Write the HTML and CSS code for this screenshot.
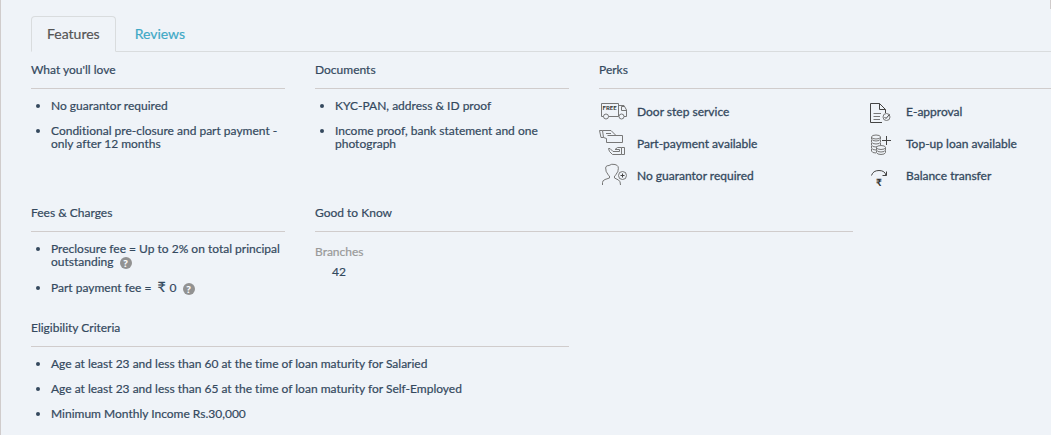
FILE: index.html
```html
<!DOCTYPE html>
<html lang="en">
<head>
<meta charset="utf-8">
<title>Loan features</title>
<link rel="stylesheet" href="styles.css">
</head>
<body>
<main class="panel">
  <div class="panel-edge"></div>
  <nav class="tabs" aria-label="Loan details">
    <a class="tab tab-active" href="#features" aria-current="page">Features</a>
    <a class="tab" href="#reviews">Reviews</a>
  </nav>
  <div class="sections" id="features">
    <section>
      <h2 class="heading">What you'll love</h2>
      <ul class="list">
        <li>No guarantor required</li>
        <li>Conditional pre-closure and part payment - only after 12 months</li>
      </ul>
    </section>
    <section>
      <h2 class="heading">Documents</h2>
      <ul class="list">
        <li>KYC-PAN, address &amp; ID proof</li>
        <li>Income proof, bank statement and one photograph</li>
      </ul>
    </section>
    <section class="wide">
      <h2 class="heading">Perks</h2>
      <ul class="perks">
        <li class="perk">
          <svg class="perk-icon" viewBox="0 0 30 30" aria-hidden="true">
            <path d="M4.500 20.500H2.500V7.500H19.500V20.500H9.500M19.500 9.500H25L27.500 14V20.500H25M25 10.500H22.500V14.500H27.500"/>
            <circle cx="7" cy="20.500" r="2.500"/><circle cx="22.500" cy="20.500" r="2.500"/>
            <text class="truck-label" x="3.500" y="14">FREE</text>
          </svg>
          <span>Door step service</span>
        </li>
        <li class="perk">
          <svg class="perk-icon" viewBox="0 0 30 30" aria-hidden="true">
            <path d="M.5 2.500H3.500L4.500 9.500H2ZM3.500 2.500H12L17 7.500H23.500V14.500H7.500V10.500L4.500 9.500M17 7.500H8.500M7 5.500H12"/>
            <path d="M22.500 19.500H25.500V26.500H22.500ZM22.500 19.500H18.500L16 21.500H20.500V23.500H14L11 20.500H9.500Q9.500 23.500 13.500 26.500H22.500"/>
          </svg>
          <span>Part-payment available</span>
        </li>
        <li class="perk">
          <svg class="perk-icon" viewBox="0 0 30 30" aria-hidden="true">
            <path d="M3.500 25V22.500Q3.500 20.500 6 19.500L10.500 18V16Q8.500 15 8 12.500Q6.500 12 7 10Q5.500 5.500 10 5.500Q12.500 3.500 16 4.500Q20.500 5.500 19 10.500Q19.500 12 18 12.500Q17.500 15 15.500 16V18L19.500 20Q21.500 21 21.500 25"/>
            <circle cx="23.500" cy="15.500" r="4"/><path class="strong" d="M23.500 13.500V17.500M21.500 15.500H25.500"/>
          </svg>
          <span>No guarantor required</span>
        </li>
        <li class="perk">
          <svg class="perk-icon" viewBox="0 0 30 30" aria-hidden="true">
            <path class="dark" d="M14 26.500H2.500V7.500H11.500L17.500 13.500V17M11.500 7.500V13.500H17.500"/>
            <path d="M5.500 17.500H13M5.500 20.500H12M5.500 23.500H12"/>
            <circle cx="18.500" cy="21" r="3.500"/><path class="dark" d="M16.500 21L18 22.500L21.500 18.500"/>
          </svg>
          <span>E-approval</span>
        </li>
        <li class="perk">
          <svg class="perk-icon" viewBox="0 0 30 30" aria-hidden="true">
            <ellipse cx="8" cy="9" rx="4.500" ry="2"/>
            <path d="M3.500 9V11Q4 13 8 13T12.500 11V9M3.500 12V14Q4 16 8 16T12.500 14V12M3.500 15V17Q4 19 8 19L9 18.500M12.500 15V17M3.500 18V20Q4 22 8 22M3.500 21V23Q4 25 8 25"/>
            <ellipse cx="13" cy="19.500" rx="4.500" ry="2"/>
            <path d="M8.500 19.500V22Q9 24 13 24T17.500 22V19.500M8.500 22.500V24.500Q9 26.500 13 26.500T17.500 24.500V22.500"/>
            <path class="strong" d="M18.500 8V17M14 12.500H23"/>
          </svg>
          <span>Top-up loan available</span>
        </li>
        <li class="perk">
          <svg class="perk-icon" viewBox="0 0 30 30" aria-hidden="true">
            <path class="dark" d="M3.500 15.500Q5 10.500 11 10.500T18 15.500M14.500 15.500H18.500V11.500"/>
            <text class="transfer-label" x="8" y="26">₹</text>
          </svg>
          <span>Balance transfer</span>
        </li>
      </ul>
    </section>
    <section>
      <h2 class="heading">Fees &amp; Charges</h2>
      <ul class="list">
        <li>Preclosure fee = Up to 2% on total principal outstanding <button class="help" type="button" aria-label="About the preclosure fee">?</button></li>
        <li>Part payment fee = <span class="rupee">₹</span> 0 <button class="help" type="button" aria-label="About the part payment fee">?</button></li>
      </ul>
    </section>
    <section class="wide">
      <h2 class="heading">Good to Know</h2>
      <dl class="facts">
        <dt>Branches</dt>
        <dd>42</dd>
      </dl>
    </section>
    <section class="wide criteria">
      <h2 class="heading">Eligibility Criteria</h2>
      <ul class="list">
        <li>Age at least 23 and less than 60 at the time of loan maturity for Salaried</li>
        <li>Age at least 23 and less than 65 at the time of loan maturity for Self-Employed</li>
        <li>Minimum Monthly Income Rs.30,000</li>
      </ul>
    </section>
  </div>
</main>
</body>
</html>
```
FILE: styles.css
```css
* {
  box-sizing: border-box;
}

body {
  margin: 0;
  background: #eff3f8;
  color: #34495e;
  font: 12px/13px Lato, "Open Sans", sans-serif;
  font-variant-ligatures: none;
  -webkit-text-stroke: 0.2px;
}

.panel {
  min-height: 100vh;
  border-left: 1px solid #d0cccc;
  overflow: hidden;
}

.panel-edge {
  height: 9px;
  border-right: 1px solid #d0cccc;
}

.tabs {
  display: flex;
  margin: 7px 0 0 30px;
  border-bottom: 1px solid #d9dcde;
}

.tab {
  margin-bottom: -1px;
  padding: 8px 15px;
  border: 1px solid transparent;
  border-radius: 4px 4px 0 0;
  color: #3fa9c6;
  font-size: 14px;
  line-height: 18px;
  text-decoration: none;
}

.tab + .tab {
  margin-left: 3px;
}

.tab-active {
  border-color: #d9dcde;
  border-bottom-color: #eff3f8;
  background: #eff3f8;
  color: #555;
}

/* The four-column grid runs past the right edge of the panel. */
.sections {
  display: grid;
  grid-template-columns: repeat(4, minmax(0, 1fr));
  gap: 14px 30px;
  margin: 11px -86px 0 30px;
}

.wide {
  grid-column: span 2;
}

.criteria {
  grid-column: 1 / span 2;
}

.heading {
  margin: 0;
  padding-bottom: 12px;
  border-bottom: 1px solid #d0cccc;
  font-size: 12px;
  font-weight: 400;
  line-height: 13px;
}

.list {
  margin: 10px 0 0;
  padding-left: 20px;
}

.list li {
  margin-bottom: 12px;
}

.perks {
  display: grid;
  grid-template-columns: 1fr 1fr;
  grid-template-rows: repeat(3, 32px);
  grid-auto-flow: column;
  margin: 6px 0 0;
  padding: 0 0 1px;
  list-style: none;
}

.perk {
  display: flex;
  align-items: center;
  gap: 8px;
  -webkit-text-stroke: 0.3px;
}

.perk-icon {
  width: 30px;
  height: 30px;
  fill: none;
  stroke: #777;
}

.perk-icon .dark,
.perk-icon .strong {
  stroke: #444;
}

.perk-icon text {
  fill: #333;
  stroke: none;
  font-weight: 700;
}

.truck-label {
  font-size: 6px;
}

.transfer-label {
  font-size: 10px;
}

.help {
  width: 12px;
  height: 12px;
  margin: 0 0 0 3px;
  padding: 0;
  border: 0;
  border-radius: 50%;
  background: #929292;
  color: #fff;
  font: 700 10px/12px Lato, sans-serif;
  vertical-align: -1px;
}

.rupee {
  margin: 0 1px 0 3px;
  font-size: 14px;
  line-height: 12px;
}

.facts {
  margin: 13px 0 0;
}

.facts dt {
  color: #999;
}

.facts dd {
  margin: 7px 0 0 17px;
}
```
